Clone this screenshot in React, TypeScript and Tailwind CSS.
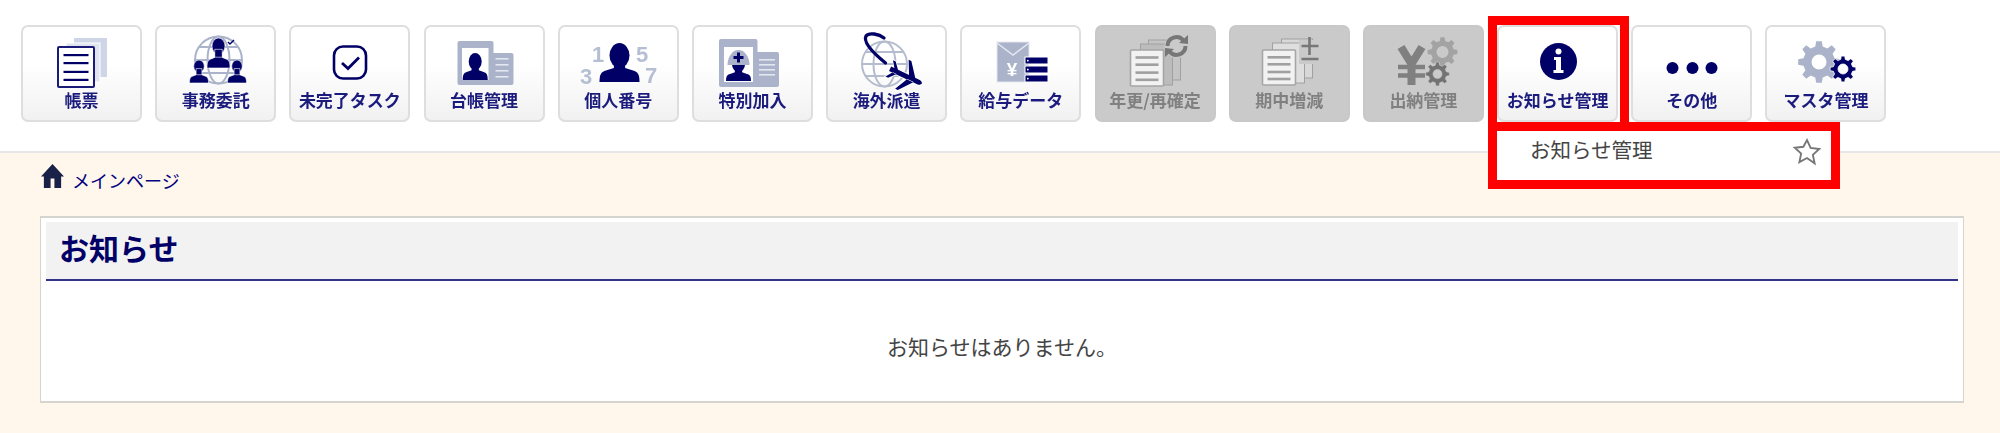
import type { ReactNode } from "react";

const NAVY = "#000066";
const SLATE = "#aab3c9";
const DIGIT = "#b6bed3";

const gearPath = (cx: number, cy: number, r: number, teeth: number, hole: number) => {
  // gear outline with a round hole, built from the tooth count
  let d = "";
  const step = (Math.PI * 2) / teeth;
  for (let i = 0; i < teeth; i++) {
    const a = i * step;
    const pts = [
      [a - step * 0.3, r * 0.76],
      [a - step * 0.17, r],
      [a + step * 0.17, r],
      [a + step * 0.3, r * 0.76],
    ];
    pts.forEach(([an, rad], j) => {
      const x = (cx + Math.cos(an) * rad).toFixed(2);
      const y = (cy + Math.sin(an) * rad).toFixed(2);
      d += `${i === 0 && j === 0 ? "M" : "L"}${x} ${y}`;
    });
  }
  d += `Z M${cx + hole} ${cy}a${hole} ${hole} 0 1 0 ${-hole * 2} 0a${hole} ${hole} 0 1 0 ${hole * 2} 0Z`;
  return d;
};

const Svg = ({ children }: { children: ReactNode }) => (
  <svg viewBox="0 0 70 60" width="70" height="60" className="overflow-visible blur-[0.4px]">
    {children}
  </svg>
);

// bust silhouette, given by its centre, top, bottom, shoulder width and head size
const Person = ({ cx, top, bottom, w, headW, headH }: { cx: number; top: number; bottom: number; w: number; headW: number; headH: number }) => {
  const h = bottom - top;
  const sh = h * 0.36;
  const y = bottom - sh;
  return (
    <g fill={NAVY}>
      <ellipse cx={cx} cy={top + headH / 2} rx={headW / 2} ry={headH / 2} />
      <rect x={cx - headW * 0.28} y={top + headH * 0.7} width={headW * 0.56} height={h - headH * 0.7 - sh * 0.5} />
      <path
        d={`M${cx - w / 2} ${bottom}c0-${sh * 0.6} ${w * 0.05}-${sh * 0.72} ${w * 0.16}-${sh * 0.82}L${cx - w * 0.14} ${y}h${w * 0.28}L${cx + w * 0.34} ${bottom - sh * 0.82}c${w * 0.11} ${sh * 0.1} ${w * 0.16} ${sh * 0.22} ${w * 0.16} ${sh * 0.82}z`}
      />
    </g>
  );
};

const Doc = ({ x, y, w, h, stroke, fill, line, inset = 5, sw = 1.6, lh = 2.2 }: { x: number; y: number; w: number; h: number; stroke: string; fill: string; line: string; inset?: number; sw?: number; lh?: number }) => (
  <g>
    <rect x={x} y={y} width={w} height={h} fill={fill} stroke={stroke} strokeWidth={sw} rx="1" />
    {[0.2, 0.4, 0.62, 0.82].map((p) => (
      <rect key={p} x={x + inset} y={y + h * p - 1} width={w - inset * 2} height={lh} fill={line} />
    ))}
  </g>
);

const Digit = ({ x, y, children }: { x: number; y: number; children: string }) => (
  <text x={x} y={y} fontSize="22" fontWeight="700" fill={DIGIT} fontFamily="'Liberation Sans', sans-serif">
    {children}
  </text>
);

const icons: Record<string, ReactNode> = {
  doc: (
    <Svg>
      <rect x="27" y="6" width="33" height="39" fill="#cdd5e6" />
      <rect x="19" y="11" width="34" height="39" fill="#dfe4ef" stroke="#fff" />
      <Doc x={11} y={15} w={36} h={40} stroke="#1a1a78" fill="#fff" line={NAVY} inset={5.5} sw={2} />
    </Svg>
  ),
  outsource: (
    <Svg>
      <g fill="none" stroke={SLATE} strokeWidth="2">
        <circle cx="37.5" cy="28" r="23.5" />
        <ellipse cx="37.5" cy="28" rx="11" ry="23.5" />
        <path d="M14 28h47M18 15h39M18 41h39" />
      </g>
      <path d="M47 10l2 2 4-4" fill="none" stroke={NAVY} strokeWidth="1.4" />
      <g stroke="#fff" strokeWidth="0.6">
        <Person cx={37.5} top={6} bottom={36} w={23} headW={13} headH={16} />
        <Person cx={18} top={28} bottom={51} w={19} headW={10.5} headH={12.5} />
        <Person cx={56} top={28} bottom={51} w={19} headW={10.5} headH={12.5} />
      </g>
    </Svg>
  ),
  check: (
    <Svg>
      <rect x="19" y="14.5" width="32" height="32" rx="9" fill="#fff" stroke={NAVY} strokeWidth="2.6" />
      <path d="M27 31l6 5.5 11-11" fill="none" stroke={NAVY} strokeWidth="2.8" />
    </Svg>
  ),
  ledger: (
    <Svg>
      <path d="M8.5 11a2 2 0 0 1 2-2h32a2 2 0 0 1 2 2v10h18a2 2 0 0 1 2 2v28a2 2 0 0 1-2 2h-52a2 2 0 0 1-2-2z" fill={SLATE} />
      <rect x="13" y="16" width="26.5" height="32" fill="#fff" />
      {[27, 33, 39, 45].map((y) => (
        <rect key={y} x="46.5" y={y - 1} width="13" height="1.6" fill="#e4e7f0" />
      ))}
      <Person cx={26.2} top={21} bottom={48} w={25} headW={13} headH={17} />
    </Svg>
  ),
  number: (
    <Svg>
      <Digit x={9} y={30}>1</Digit>
      <Digit x={53} y={30}>5</Digit>
      <Digit x={-3} y={52}>3</Digit>
      <Digit x={62} y={51}>7</Digit>
      <Person cx={36.5} top={11} bottom={50} w={40} headW={20} headH={25} />
    </Svg>
  ),
  special: (
    <Svg>
      <path d="M2 9a2 2 0 0 1 2-2h34.5a2 2 0 0 1 2 2v11h19.5a2 2 0 0 1 2 2v31a2 2 0 0 1-2 2h-56a2 2 0 0 1-2-2z" fill={SLATE} />
      <rect x="7" y="15" width="29" height="35" fill="#fff" />
      {[28, 33, 38, 43].map((y) => (
        <rect key={y} x="42" y={y - 1} width="16" height="1.6" fill="#e4e7f0" />
      ))}
      <Person cx={21.5} top={25} bottom={49} w={25} headW={13} headH={15} />
      <path d="M10.5 33a11 15 0 0 1 22 0z" fill={SLATE} />
      <path d="M20 20.5h3v3.5h3.5v3h-3.5v3.500h-3v-3.500h-3.500v-3h3.500z" fill={NAVY} />
    </Svg>
  ),
  overseas: (
    <Svg>
      <g fill="none" stroke="#b4bccd" strokeWidth="2">
        <circle cx="32.5" cy="32" r="22.5" />
        <ellipse cx="32.5" cy="32" rx="11" ry="22.5" />
        <path d="M10 32h45M14 20h37M14 44h37" />
      </g>
      <path d="M33.5 31C20 20 11 10 14 4c3-4 13-2 18 2" fill="none" stroke={NAVY} strokeWidth="3.3" strokeLinecap="round" />
      <g transform="translate(53.5 44) rotate(25)" fill={NAVY} stroke="#fff" strokeWidth="1.6" style={{ paintOrder: "stroke" }}>
        <path d="M-17 -2.500H14c2 0 4 1 4 2.500s-2 2.500-4 2.500H-17zM3 -2L-4 -16h3L10 -2zM3 2L-4 16h3L10 2zM-13 -2l-5-7h3l6 7zM-13 2l-5 7h3l6-7z" />
      </g>
    </Svg>
  ),
  salary: (
    <Svg>
      <rect x="11" y="10" width="32" height="40" fill={SLATE} stroke="#e4e7ef" />
      <path d="M11 11l16 12L43 11" fill="none" stroke="#e4e7ef" strokeWidth="1.5" />
      <text x="26" y="44" fontSize="19" fontWeight="700" textAnchor="middle" fill="#fff" fontFamily="'Liberation Sans', sans-serif">¥</text>
      {[25, 34, 43].map((y) => (
        <g key={y}>
          <rect x="39" y={y} width="23" height="7" fill={NAVY} stroke="#fff" />
          <rect x="41" y={y + 2.8} width="1.6" height="1.6" fill="#fff" />
        </g>
      ))}
    </Svg>
  ),
  renew: (
    <Svg>
      <rect x="28.5" y="8" width="32" height="40" fill="#c4c4c4" stroke="#a0a0a0" />
      <rect x="20.5" y="12" width="32" height="41" fill="#bcbcbc" stroke="#a0a0a0" />
      <Doc x={10.5} y={18} w={33} h={36} stroke="#a5a5a5" fill="#f2f2f2" line="#a0a0a0" lh={2.6} />
      <circle cx="56.5" cy="14" r="12" fill="#cacaca" />
      <g fill="none" stroke="#777" strokeWidth="4">
        <path d="M47.5 14a9 9 0 0 1 16-5.500" />
        <path d="M65.5 14a9 9 0 0 1-16 5.500" />
      </g>
      <path d="M59 11l9 1 0-9zM54 17l-9-1 0 9z" fill="#777" />
    </Svg>
  ),
  change: (
    <Svg>
      <rect x="27.5" y="7" width="31" height="39" fill="#d8d8d8" stroke="#a0a0a0" />
      <rect x="18.5" y="11" width="32" height="40" fill="#dedede" stroke="#a0a0a0" />
      <Doc x={8.5} y={18} w={33} h={35} stroke="#a5a5a5" fill="#f2f2f2" line="#a0a0a0" lh={2.6} />
      <rect x="45" y="8" width="22" height="24" fill="#cacaca" />
      <path d="M47.5 14h17M55.5 5v18M47.5 27h17" stroke="#777" strokeWidth="2.6" />
    </Svg>
  ),
  cash: (
    <Svg>
      <path d="M13 15l10.500 17L34 15M23.500 32v21" fill="none" stroke="#808080" strokeWidth="8" />
      <path d="M10 35h27M10 43.500h27" stroke="#808080" strokeWidth="4.500" />
      <path d={gearPath(54.5, 20, 15, 8, 6)} fill="#a3a3a3" fillRule="evenodd" />
      <path d={gearPath(49.5, 42, 12, 8, 4.5)} fill="#737373" fillRule="evenodd" stroke="#cacaca" strokeWidth="0.6" />
    </Svg>
  ),
  info: (
    <Svg>
      <circle cx="35.5" cy="29.5" r="18.5" fill={NAVY} />
      <circle cx="35.5" cy="19.5" r="3" fill="#fff" />
      <path d="M31 25h7v13h2.500v3h-10v-3h2.500V28h-2z" fill="#fff" />
    </Svg>
  ),
  more: (
    <Svg>
      <circle cx="15.5" cy="36" r="6" fill={NAVY} />
      <circle cx="35.5" cy="36" r="6" fill={NAVY} />
      <circle cx="54.5" cy="36" r="6" fill={NAVY} />
    </Svg>
  ),
  master: (
    <Svg>
      <path d={gearPath(28, 30, 21, 8, 7.5)} fill={SLATE} fillRule="evenodd" />
      <path d={gearPath(52, 37, 13, 8, 5)} fill={NAVY} fillRule="evenodd" stroke="#fff" strokeWidth="0.8" />
    </Svg>
  ),
};

const menu = [
  { label: "帳票", icon: "doc" },
  { label: "事務委託", icon: "outsource" },
  { label: "未完了タスク", icon: "check" },
  { label: "台帳管理", icon: "ledger" },
  { label: "個人番号", icon: "number" },
  { label: "特別加入", icon: "special" },
  { label: "海外派遣", icon: "overseas" },
  { label: "給与データ", icon: "salary" },
  { label: "年更/再確定", icon: "renew", off: true },
  { label: "期中増減", icon: "change", off: true },
  { label: "出納管理", icon: "cash", off: true },
  { label: "お知らせ管理", icon: "info", marked: true },
  { label: "その他", icon: "more" },
  { label: "マスタ管理", icon: "master" },
];

const MenuButton = ({ label, icon, off, marked }: { label: string; icon: string; off?: boolean; marked?: boolean }) => (
  <div
    className={`relative w-[121px] h-[97px] shrink-0 flex flex-col items-center rounded-[7px] border-2 pt-[5px] ${
      off
        ? "bg-[#cacaca] border-[#c8c8c8] text-[#808080]"
        : "bg-gradient-to-b from-white from-40% to-[#f1f1f1] border-[#dedede] text-[#1b1b7e]"
    }`}
  >
    {icons[icon]}
    <span className="text-[17px] leading-[20px] font-bold -mt-[2px] whitespace-nowrap blur-[0.3px]">{label}</span>
    {marked && (
      <span className="absolute -left-[11px] -top-[11px] -right-[13px] -bottom-[2px] border-[9px] border-b-0 border-[#ff0000]" />
    )}
  </div>
);

export default function App() {
  return (
    <div className="relative w-[2000px] h-[433px] overflow-hidden bg-[#fff6ec] font-['Noto_Sans_CJK_JP','Noto_Sans',sans-serif] text-[#444]">
      <header className="h-[153px] bg-white border-b-2 border-[#e6e6e6] pt-[25px] pl-[21px]">
        <nav className="flex gap-[13.2px]">
          {menu.map((m) => (
            <MenuButton key={m.label} {...m} />
          ))}
        </nav>
      </header>

      <div className="absolute left-[1488px] top-[122px] w-[352px] h-[67px] border-[9px] border-[#ff0000] bg-white flex items-start justify-between pl-[33px] pr-[9px]">
        <span className="text-[20.5px] leading-[30px] mt-[3px]">お知らせ管理</span>
        <svg viewBox="0 0 24 24" width="30" height="30" fill="none" stroke="#777" strokeWidth="1.5" className="mt-[6px]">
          <path d="M12 2.5l2.900 6.300 6.900.8-5.100 4.700 1.400 6.800L12 16.800l-6.100 3.300 1.400-6.800-5.100-4.700 6.900-.8z" />
        </svg>
      </div>

      <main className="ml-[40px] w-[1924px]">
        <div className="h-[63px] flex items-start gap-[8px] pl-[1px]">
          <svg viewBox="0 0 24 25" width="23" height="24" fill="#1a2148" className="mt-[11px]">
            <path d="M12 0L24 13h-3V25H14V15H10V25H3V13H0z" />
          </svg>
          <span className="text-[18px] leading-[24px] mt-[15px] text-[#000080]">メインページ</span>
        </div>
        <section className="h-[187px] bg-white border border-y-2 border-[#d6d4cf] p-[4px] pl-[5px] pr-[5px]">
          <h1 className="h-[59px] bg-[#f2f2f2] border-b-2 border-[#33338c] pl-[13px] text-[30px] leading-[51px] font-bold text-[#000066]">
            お知らせ
          </h1>
          <p className="text-center text-[21px] leading-[30px] mt-[50px]">お知らせはありません。</p>
        </section>
      </main>
    </div>
  );
}
